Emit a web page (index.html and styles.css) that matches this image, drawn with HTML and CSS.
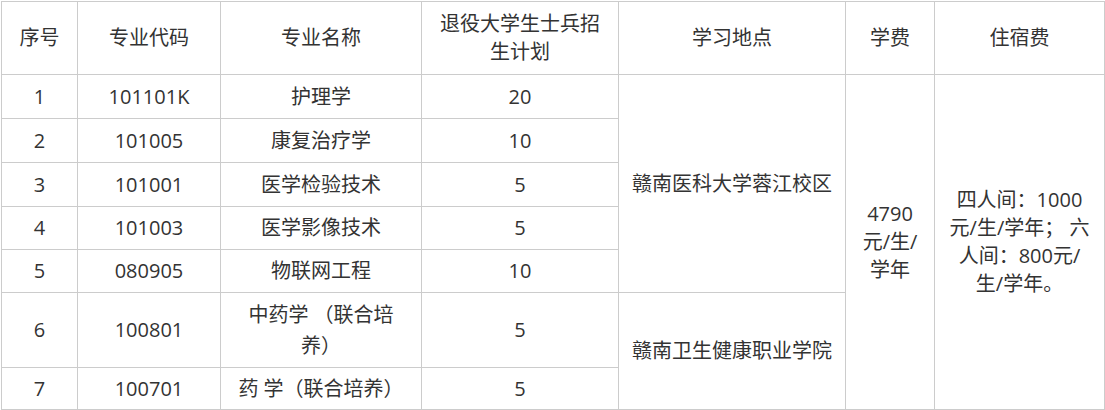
FILE: index.html
```html
<!DOCTYPE html>
<html lang="zh-CN">
<head>
<meta charset="utf-8">
<title>招生计划</title>
<link rel="stylesheet" href="styles.css">
</head>
<body>
<table class="plan">
  <colgroup>
    <col class="c-no">
    <col class="c-code">
    <col class="c-name">
    <col class="c-plan">
    <col class="c-place">
    <col class="c-fee">
    <col class="c-dorm">
  </colgroup>
  <thead>
    <tr class="r-head">
      <th>序号</th>
      <th>专业代码</th>
      <th>专业名称</th>
      <th>退役大学生士兵招生计划</th>
      <th>学习地点</th>
      <th>学费</th>
      <th>住宿费</th>
    </tr>
  </thead>
  <tbody>
    <tr class="r-a">
      <td>1</td>
      <td>101101K</td>
      <td>护理学</td>
      <td>20</td>
      <td rowspan="5">赣南医科大学蓉江校区</td>
      <td rowspan="7">4790元/生/学年</td>
      <td rowspan="7">四人间：1000元/生/学年； 六人间：800元/生/学年。</td>
    </tr>
    <tr class="r-a">
      <td>2</td>
      <td>101005</td>
      <td>康复治疗学</td>
      <td>10</td>
    </tr>
    <tr class="r-a">
      <td>3</td>
      <td>101001</td>
      <td>医学检验技术</td>
      <td>5</td>
    </tr>
    <tr class="r-b">
      <td>4</td>
      <td>101003</td>
      <td>医学影像技术</td>
      <td>5</td>
    </tr>
    <tr class="r-b">
      <td>5</td>
      <td>080905</td>
      <td>物联网工程</td>
      <td>10</td>
    </tr>
    <tr class="r-c">
      <td>6</td>
      <td>100801</td>
      <td class="two">中药学 （联合培养）</td>
      <td>5</td>
      <td rowspan="2">赣南卫生健康职业学院</td>
    </tr>
    <tr class="r-d">
      <td>7</td>
      <td>100701</td>
      <td>药 学（联合培养）</td>
      <td>5</td>
    </tr>
  </tbody>
</table>
</body>
</html>
```

FILE: styles.css
```css
html, body {
  margin: 0;
  padding: 0;
  background: #ffffff;
}

body {
  padding: 1px 0 0 1px;
}

.plan {
  border-collapse: collapse;
  table-layout: fixed;
  width: 1104px;
  font-family: "Open Sans", "Noto Sans CJK SC", sans-serif;
  font-size: 20px;
  line-height: 28px;
  color: #333333;
  text-spacing-trim: space-all;
}

.plan th,
.plan td {
  border: 1px solid #cccccc;
  padding: 0 12px;
  text-align: center;
  vertical-align: middle;
  font-weight: normal;
}

.c-no { width: 76px; }
.c-code { width: 143px; }
.c-name { width: 201px; }
.c-plan { width: 197px; }
.c-place { width: 227px; }
.c-fee { width: 89px; }
.c-dorm { width: 170px; }

.r-head { height: 73px; }
.r-a { height: 44px; }
.r-b { height: 43px; }
.r-c { height: 75px; }
.r-d { height: 42px; }

.plan .two {
  line-height: 31px;
}
```
